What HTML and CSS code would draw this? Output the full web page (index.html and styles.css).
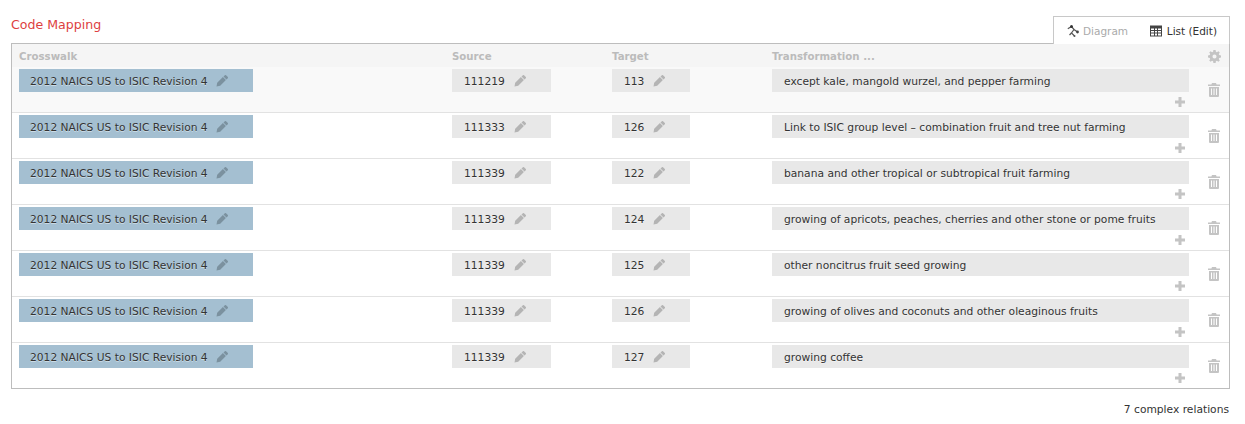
FILE: index.html
```html
<!DOCTYPE html>
<html lang="en">
<head>
    <meta charset="UTF-8">
    <title>Code Mapping</title>
    <link rel="stylesheet" href="styles.css">
</head>
<body>
    <svg class="defs" width="0" height="0">
        <symbol id="i-pencil" viewBox="0 0 12 12"><path d="M8.600 .4a1.200 1.200 0 0 1 1.700 0l1.300 1.300a1.200 1.200 0 0 1 0 1.700L10.500 4.500 7.500 1.500zM6.900 2.100 9.900 5.100 4.200 10.800 .5 11.500 1.200 7.800z"/></symbol>
        <symbol id="i-plus" viewBox="0 0 10 10"><path d="M3.500 0h3v3.500H10v3H6.500V10h-3V6.500H0v-3h3.500z"/></symbol>
        <symbol id="i-trash" viewBox="0 0 12 14"><path d="M4 0h4l.6 1.500H12V3H0V1.500h3.400zM1 4h10v9a1 1 0 0 1-1 1H2a1 1 0 0 1-1-1zm2 1.500V12h1V5.500zm2.500 0V12h1V5.500zm2.500 0V12h1V5.500z" fill-rule="evenodd"/></symbol>
        <symbol id="i-cog" viewBox="0 0 14 14"><path d="M5.800 0h2.400l.3 1.900 1.100.5L11.200 1.300 12.700 2.800 11.600 4.400l.5 1.100L14 5.800v2.400l-1.900.3-.5 1.100 1.100 1.600-1.500 1.500-1.600-1.100-1.100.5L8.200 14H5.800l-.3-1.900-1.100-.5-1.600 1.100-1.500-1.500 1.100-1.600-.5-1.100L0 8.200V5.800l1.900-.3.500-1.100L1.300 2.800 2.800 1.300l1.600 1.100 1.100-.5zM7 4.800a2.200 2.200 0 1 0 0 4.400 2.200 2.200 0 0 0 0-4.400z" fill-rule="evenodd"/></symbol>
    </svg>

    <div class="top">
        <h1 class="title">Code Mapping</h1>
        <div class="tabs">
            <span class="tab tab-off">
                <svg class="tab-icon" viewBox="0 0 12 12"><g fill="none" stroke="#555" stroke-width="1.200"><path d="M.8 3.800 4.500 1.500 7 4.500 10.500 7"/><path d="M7 4.500 4.500 8 7.500 11"/><path d="M4.500 8 2.500 10"/></g><circle cx="4.500" cy="1.500" r="1.500" fill="#333"/><circle cx="10.500" cy="7" r="1.400" fill="#444"/><circle cx="7.500" cy="11" r="1" fill="#555"/></svg>
                Diagram
            </span>
            <span class="tab">
                <svg class="tab-icon" viewBox="0 0 12 11"><path fill="#444" fill-rule="evenodd" d="M0 0h12v11H0zM1 3v1.500h3V3zm4 0v1.500h2V3zm3 0v1.500h3V3zM1 5.500V7h3V5.500zm4 0V7h2V5.500zm3 0V7h3V5.500zM1 8v2h3V8zm4 0v2h2V8zm3 0v2h3V8z"/></svg>
                List (Edit)
            </span>
        </div>
    </div>

    <div class="panel">
        <div class="row head">
            <div>Crosswalk</div>
            <div>Source</div>
            <div>Target</div>
            <div>Transformation ...</div>
            <div class="action"><svg class="ic-cog"><use href="#i-cog"/></svg></div>
        </div>
        <div id="rows"></div>
    </div>

    <div class="summary">7 complex relations</div>

    <script>
        // mapping rows
        const mappings = [
            ["111219", "113", "except kale, mangold wurzel, and pepper farming"],
            ["111333", "126", "Link to ISIC group level – combination fruit and tree nut farming"],
            ["111339", "122", "banana and other tropical or subtropical fruit farming"],
            ["111339", "124", "growing of apricots, peaches, cherries and other stone or pome fruits"],
            ["111339", "125", "other noncitrus fruit seed growing"],
            ["111339", "126", "growing of olives and coconuts and other oleaginous fruits"],
            ["111339", "127", "growing coffee"]
        ];
        const pencil = '<svg class="ic-pencil"><use href="#i-pencil"/></svg>';
        document.getElementById("rows").innerHTML = mappings.map(m => `
            <div class="row item">
                <div><span class="chip chip-blue"><span class="val">2012 NAICS US to ISIC Revision 4</span>${pencil}</span></div>
                <div><span class="chip chip-source"><span class="val">${m[0]}</span>${pencil}</span></div>
                <div><span class="chip chip-target"><span class="val">${m[1]}</span>${pencil}</span></div>
                <div class="trans">
                    <span class="chip chip-wide"><span>${m[2]}</span></span>
                    <svg class="ic-plus"><use href="#i-plus"/></svg>
                </div>
                <div class="action"><svg class="ic-trash"><use href="#i-trash"/></svg></div>
            </div>`).join("");
    </script>
</body>
</html>
```

FILE: styles.css
```css
body {
    margin: 0;
    padding: 0 15px 0 11px;
    background: #fff;
    color: #333;
    font-family: "DejaVu Sans", sans-serif;
    font-size: 10.7px;
}
.defs {
    display: block;
    height: 0;
}
.top {
    display: flex;
    justify-content: space-between;
    align-items: flex-end;
    height: 44px;
    margin-bottom: -1px;
}
.title {
    margin: 0 0 11px 0;
    color: #dd3f3f;
    font-size: 12.6px;
    font-weight: normal;
    line-height: 16px;
}
.tabs {
    display: flex;
    justify-content: space-between;
    align-items: center;
    box-sizing: border-box;
    position: relative;
    width: 177px;
    height: 28px;
    padding: 0 12px 0 13px;
    background: #fff;
    border: 1px solid #c8c8c8;
    border-bottom: none;
    font-size: 10.5px;
}
.tab {
    display: flex;
    align-items: center;
    gap: 5px;
    white-space: nowrap;
}
.tab-off {
    gap: 4px;
    color: #aaa;
}
.tab-icon {
    width: 12px;
    height: 12px;
}
.panel {
    border: 1px solid #bdbdbd;
}
.row {
    display: grid;
    grid-template-columns: 440px 160px 160px 417px 1fr;
}
.row > div:first-child {
    padding-left: 7px;
}
.head {
    box-sizing: border-box;
    height: 23px;
    padding-top: 1px;
    align-items: center;
    background: #f5f5f5;
    color: #bbb;
    font-size: 10.2px;
    font-weight: bold;
}
.item {
    box-sizing: border-box;
    height: 46px;
    padding-top: 2px;
    border-bottom: 1px solid #e2e2e2;
}
.item:first-child {
    background: #f9f9f9;
}
.item:last-child {
    border-bottom: none;
    height: 45px;
}
.chip {
    display: flex;
    align-items: center;
    box-sizing: border-box;
    height: 23px;
    padding-left: 11px;
    background: #e8e8e8;
    text-shadow: 0 1px 0 rgba(255, 255, 255, 0.45);
}
.chip > span {
    padding-top: 1px;
}
.chip-blue {
    width: 234px;
    background: #a4bfd1;
}
.chip-source {
    width: 99px;
    padding-left: 12px;
}
.chip-target {
    width: 78px;
    padding-left: 12px;
}
.chip-wide {
    width: 417px;
    padding-left: 12px;
}
.val {
    margin-right: 9px;
}
.ic-pencil {
    width: 12px;
    height: 12px;
    fill: #b4b4b4;
}
.chip-blue .val {
    margin-right: 8px;
}
.chip-blue .ic-pencil {
    fill: #7b919f;
}
.trans {
    display: flex;
    flex-direction: column;
}
.ic-plus {
    align-self: flex-end;
    width: 10px;
    height: 10px;
    margin: 5px 4px 0 0;
    fill: #c4c4c4;
}
.action {
    display: flex;
    justify-content: center;
    padding-left: 10px;
}
.ic-cog {
    width: 13px;
    height: 13px;
    fill: #c4c4c4;
}
.ic-trash {
    width: 12px;
    height: 14px;
    margin-top: 14px;
    fill: #c4c4c4;
}
.summary {
    margin-top: 14px;
    padding-right: 1px;
    text-align: right;
    line-height: 14px;
}
```
